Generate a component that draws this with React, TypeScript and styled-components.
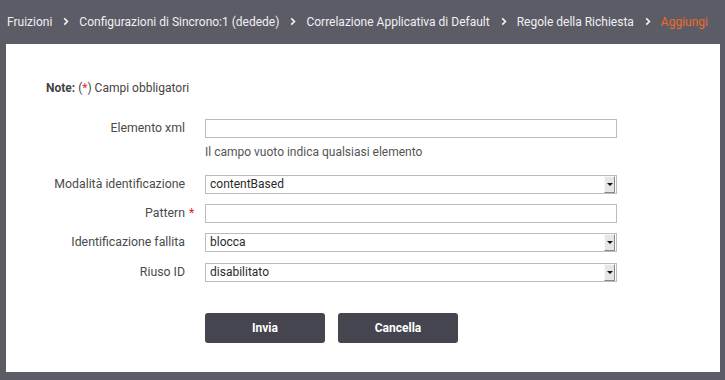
import React from 'react';
import styled, { createGlobalStyle } from 'styled-components';

const GlobalStyle = createGlobalStyle`
  html, body {
    margin: 0;
    padding: 0;
    background: #5c5c66;
  }
  body {
    font-family: Roboto, "Liberation Sans", sans-serif;
  }
`;

const Page = styled.div`
  width: 725px;
  height: 380px;
  background: #5c5c66;
  display: flex;
  flex-direction: column;
  overflow: hidden;
`;

const Breadcrumb = styled.nav`
  height: 44px;
  display: flex;
  align-items: center;
  padding: 0 0 1px 7px;
  box-sizing: border-box;
  font-size: 12px;
  color: #f0f0f2;
`;

const Crumb = styled.span<{ $active?: boolean }>`
  color: ${p => (p.$active ? '#ef6b2a' : '#f0f0f2')};
  white-space: nowrap;
`;

const Sep = styled.span`
  display: inline-flex;
  align-items: center;
  padding: 0 10px 0 11px;
`;

const Panel = styled.main`
  margin: 0 5px 0 6px;
  height: 328px;
  background: #ffffff;
  padding-top: 36px;
  box-sizing: border-box;
`;

const Note = styled.div`
  font-size: 12px;
  line-height: 16px;
  color: #444;
  padding-left: 40px;
  margin-bottom: 23px;

  b {
    font-weight: 700;
  }
`;

const Star = styled.span`
  color: #e0282d;
`;

const Row = styled.div<{ $gap?: number }>`
  display: grid;
  grid-template-columns: 179px 412px;
  column-gap: 20px;
  align-items: start;
  margin-bottom: ${p => p.$gap ?? 10}px;
`;

const Label = styled.label`
  position: relative;
  text-align: right;
  font-size: 12.3px;
  line-height: 19px;
  color: #4a4a4a;
  white-space: nowrap;
`;

const LabelStar = styled.span`
  position: absolute;
  left: 183px;
  top: 0;
  color: #e0282d;
`;

const Field = styled.div`
  display: flex;
  flex-direction: column;
`;

const TextBox = styled.input`
  box-sizing: border-box;
  width: 412px;
  height: 19px;
  margin: 0;
  border: 1px solid #bcbcbc;
  padding: 0 4px;
  font: inherit;
  font-size: 12px;
  outline: none;
`;

const Help = styled.div`
  margin-top: 7px;
  font-size: 12px;
  line-height: 14px;
  color: #555;
`;

const SelectBox = styled.div`
  box-sizing: border-box;
  width: 412px;
  height: 19px;
  border: 1px solid #bcbcbc;
  display: flex;
  align-items: stretch;
  font-size: 12px;
  color: #2a2a2a;
`;

const SelectValue = styled.span`
  flex: 1;
  padding-left: 4px;
  line-height: 17px;
`;

const ArrowButton = styled.span`
  width: 11px;
  margin: 0 1px 0 0;
  background: #e6e6e6;
  border-right: 1px solid #888;
  border-bottom: 1px solid #888;
  border-top: 1px solid #f8f8f8;
  border-left: 1px solid #f8f8f8;
  box-sizing: border-box;
  display: flex;
  align-items: center;
  justify-content: center;

  &::after {
    content: '';
    border-left: 3px solid transparent;
    border-right: 3px solid transparent;
    border-top: 3px solid #111;
  }
`;

const Buttons = styled.div`
  display: flex;
  gap: 13px;
  padding-left: 199px;
  margin-top: 31px;
`;

const Button = styled.button`
  width: 120px;
  height: 30px;
  border: none;
  border-radius: 3px;
  background: #45454f;
  color: #fff;
  font-family: Roboto, "Liberation Sans", sans-serif;
  font-weight: 700;
  font-size: 12px;
  cursor: pointer;
`;

const Chevron = () => (
  <svg width="6" height="9" viewBox="0 0 6 9">
    <path d="M1.2 1.3 L4.4 4.5 L1.2 7.7" fill="none" stroke="#f0f0f2" strokeWidth="1.7" />
  </svg>
);

const Select: React.FC<{ value: string }> = ({ value }) => (
  <SelectBox>
    <SelectValue>{value}</SelectValue>
    <ArrowButton />
  </SelectBox>
);

const crumbs = [
  'Fruizioni',
  'Configurazioni di Sincrono:1 (dedede)',
  'Correlazione Applicativa di Default',
  'Regole della Richiesta',
];

export default function App() {
  return (
    <Page>
      <GlobalStyle />
      <Breadcrumb>
        {crumbs.map(c => (
          <React.Fragment key={c}>
            <Crumb>{c}</Crumb>
            <Sep><Chevron /></Sep>
          </React.Fragment>
        ))}
        <Crumb $active>Aggiungi</Crumb>
      </Breadcrumb>
      <Panel>
        <Note>
          <b>Note:</b> (<Star>*</Star>) Campi obbligatori
        </Note>
        <Row $gap={16}>
          <Label>Elemento xml</Label>
          <Field>
            <TextBox />
            <Help>Il campo vuoto indica qualsiasi elemento</Help>
          </Field>
        </Row>
        <Row>
          <Label>Modalità identificazione</Label>
          <Select value="contentBased" />
        </Row>
        <Row>
          <Label>
            Pattern <LabelStar>*</LabelStar>
          </Label>
          <TextBox />
        </Row>
        <Row $gap={11}>
          <Label>Identificazione fallita</Label>
          <Select value="blocca" />
        </Row>
        <Row $gap={0}>
          <Label>Riuso ID</Label>
          <Select value="disabilitato" />
        </Row>
        <Buttons>
          <Button>Invia</Button>
          <Button>Cancella</Button>
        </Buttons>
      </Panel>
    </Page>
  );
}
